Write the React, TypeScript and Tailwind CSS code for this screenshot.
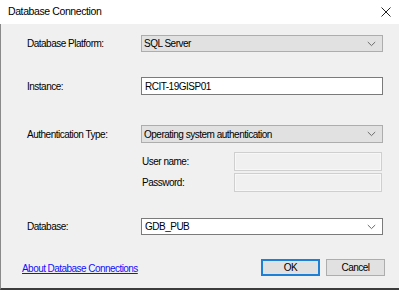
import React from "react";

const Chevron = () => (
  <svg width="9" height="6" viewBox="0 0 9 6" className="shrink-0">
    <path d="M0.8 1 L4.5 4.6 L8.2 1" fill="none" stroke="#6a6a6a" strokeWidth="1" />
  </svg>
);

export default function App() {
  const label = "text-[10px] tracking-[-0.5px] text-black";
  return (
    <div className="w-[399px] h-[290px] bg-[#f0f0f0] flex flex-col overflow-hidden font-['Liberation_Sans',Arial,sans-serif]">
      <div className="h-[24px] bg-white flex items-center justify-between pl-[8px] pr-[8px] shrink-0">
        <span className="text-[10.5px] tracking-[-0.4px] text-black">Database Connection</span>
        <svg width="10" height="10" viewBox="0 0 10 10">
          <path d="M0.5 0.5 L9.5 9.5 M9.5 0.5 L0.5 9.5" stroke="#222" strokeWidth="1" />
        </svg>
      </div>
      <div className="flex-1 flex flex-col border-l border-l-[#8a8a8a] border-b-2 border-b-[#3c3c3c]">
        {/* Platform */}
        <div className="flex items-center mt-[11px] pl-[26px] h-[17px]">
          <div className={`w-[114px] ${label}`}>Database Platform:</div>
          <div className="w-[242px] h-[17px] bg-[#e1e1e1] border border-[#adadad] flex items-center justify-between pl-[2px] pr-[6px]">
            <span className={label}>SQL Server</span>
            <Chevron />
          </div>
        </div>
        {/* Instance */}
        <div className="flex items-center mt-[25px] pl-[26px] h-[18px]">
          <div className={`w-[114px] ${label}`}>Instance:</div>
          <div className="w-[242px] h-[18px] bg-white border border-[#7a7a7a] flex items-center pl-[3px]">
            <span className={label}>RCIT-19GISP01</span>
          </div>
        </div>
        {/* Auth */}
        <div className="flex items-center mt-[30px] pl-[26px] h-[18px]">
          <div className={`w-[114px] ${label}`}>Authentication Type:</div>
          <div className="w-[242px] h-[18px] bg-[#e1e1e1] border border-[#adadad] flex items-center justify-between pl-[2px] pr-[6px]">
            <span className={label}>Operating system authentication</span>
            <Chevron />
          </div>
        </div>
        {/* User name */}
        <div className="flex items-center mt-[9px] pl-[141px] h-[19px]">
          <div className={`w-[92px] ${label}`}>User name:</div>
          <div className="w-[148px] h-[19px] bg-[#f0f0f0] border border-[#cfcfcf] shadow-[inset_0_0_0_1px_#f7f7f7]" />
        </div>
        <div className="flex items-center mt-[2px] pl-[141px] h-[19px]">
          <div className={`w-[92px] ${label}`}>Password:</div>
          <div className="w-[148px] h-[19px] bg-[#f0f0f0] border border-[#cfcfcf] shadow-[inset_0_0_0_1px_#f7f7f7]" />
        </div>
        {/* Database */}
        <div className="flex items-center mt-[26px] pl-[26px] h-[17px]">
          <div className={`w-[114px] ${label}`}>Database:</div>
          <div className="w-[242px] h-[17px] bg-white border border-[#7a7a7a] flex items-center justify-between pl-[3px] pr-[6px]">
            <span className={label}>GDB_PUB</span>
            <Chevron />
          </div>
        </div>
        {/* Bottom row */}
        <div className="flex items-center mt-[24px] pl-[21px] h-[17px]">
          <span className="text-[10px] tracking-[-0.55px] text-[#1010ff] underline decoration-[#1010ff] underline-offset-[1px] mt-[2px]">
            About Database Connections
          </span>
          <div className="flex-1" />
          <div className="w-[59px] h-[17px] bg-[#e1e1e1] border-2 border-[#1d7fd6] flex items-center justify-center">
            <span className={label}>OK</span>
          </div>
          <div className="w-[59px] h-[17px] ml-[6px] mr-[14px] bg-[#e1e1e1] border border-[#adadad] flex items-center justify-center">
            <span className={label}>Cancel</span>
          </div>
        </div>
      </div>
    </div>
  );
}
